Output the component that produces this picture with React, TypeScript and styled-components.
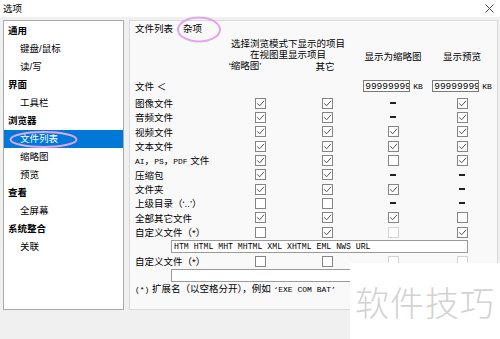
import React from 'react';
import styled, { createGlobalStyle } from 'styled-components';

const GlobalStyle = createGlobalStyle`
  html, body {
    margin: 0;
    padding: 0;
    background: #f0f0f0;
  }
  body {
    font-family: "Liberation Sans", "Noto Sans CJK SC", sans-serif;
    color: #000;
  }
`;

// label | 缩略图 | 其它 | 显示为缩略图 | 显示预览
const COLS = '90px 70px 64px 68px 70px';

type Mark = 'on' | 'off' | 'dash' | 'dis' | 'none';

const Mono = styled.span`
  font-family: "Liberation Mono", monospace;
  font-size: 8px;
`;

const fileRows: { label: React.ReactNode; cells: Mark[] }[] = [
  { label: '图像文件', cells: ['on', 'on', 'dash', 'on'] },
  { label: '音频文件', cells: ['on', 'on', 'dash', 'on'] },
  { label: '视频文件', cells: ['on', 'on', 'on', 'on'] },
  { label: '文本文件', cells: ['on', 'on', 'on', 'on'] },
  {
    label: (
      <>
        <Mono>AI</Mono>，<Mono>PS</Mono>，<Mono>PDF</Mono> 文件
      </>
    ),
    cells: ['on', 'on', 'off', 'on'],
  },
  { label: '压缩包', cells: ['on', 'on', 'dash', 'dash'] },
  { label: '文件夹', cells: ['on', 'on', 'on', 'dash'] },
  { label: '上级目录（‘..’）', cells: ['off', 'off', 'dash', 'dash'] },
  { label: '全部其它文件', cells: ['on', 'on', 'on', 'off'] },
  { label: '自定义文件（*）', cells: ['off', 'on', 'dis', 'on'] },
];

const treeItems: { text: string; group?: boolean; selected?: boolean }[] = [
  { text: '通用', group: true },
  { text: '键盘/鼠标' },
  { text: '读/写' },
  { text: '界面', group: true },
  { text: '工具栏' },
  { text: '浏览器', group: true },
  { text: '文件列表', selected: true },
  { text: '缩略图' },
  { text: '预览' },
  { text: '查看', group: true },
  { text: '全屏幕' },
  { text: '系统整合', group: true },
  { text: '关联' },
];

const Checkbox: React.FC<{ mark: Mark }> = ({ mark }) => {
  if (mark === 'none') return null;
  if (mark === 'dash') return <Dash />;
  return (
    <Box $disabled={mark === 'dis'}>
      {mark === 'on' && (
        <svg width="9" height="9" viewBox="0 0 9 9">
          <polyline points="1.2,4.3 3.6,6.8 8,1.8" fill="none" stroke="#555" strokeWidth="1" />
        </svg>
      )}
    </Box>
  );
};

const App: React.FC = () => {
  return (
    <Window>
      <GlobalStyle />
      <TitleBar>
        <span>选项</span>
        <svg width="9" height="9" viewBox="0 0 9 9">
          <path d="M0.5 0.5 L8.5 8.5 M8.5 0.5 L0.5 8.5" stroke="#444" strokeWidth="1" />
        </svg>
      </TitleBar>

      <Body>
        <Tree>
          {treeItems.map((it) => (
            <TreeItem key={it.text} $group={it.group} $selected={it.selected}>
              {it.text}
            </TreeItem>
          ))}
        </Tree>

        <Panel>
          <Tabs>
            <Tab $active>文件列表</Tab>
            <Tab>杂项</Tab>
          </Tabs>

          <Header>
            <HeadCell $col="2 / 4" $row="1 / 3" $shiftX={8}>
              <div>选择浏览模式下显示的项目</div>
              <div>在视图里显示项目</div>
            </HeadCell>
            <HeadCell $col="2" $row="3" $shiftX={30}>‘缩略图’</HeadCell>
            <HeadCell $col="3" $row="3" $shiftX={4} $shiftY={2}>其它</HeadCell>
            <HeadCell $col="4" $row="1 / 4" $shiftY={3}>显示为缩略图</HeadCell>
            <HeadCell $col="5" $row="1 / 4" $shiftY={3}>显示预览</HeadCell>
          </Header>

          <SizeRow>
            <span>文件 ＜</span>
            <span />
            <span />
            <SizeCell>
              <SizeInput readOnly value="99999999" />
              <Mono>KB</Mono>
            </SizeCell>
            <SizeCell>
              <SizeInput readOnly value="99999999" />
              <Mono>KB</Mono>
            </SizeCell>
          </SizeRow>

          <Rows>
            {fileRows.map((r, i) => (
              <Row key={i}>
                <Label>{r.label}</Label>
                {r.cells.map((c, j) => (
                  <Cell key={j}>
                    <Checkbox mark={c} />
                  </Cell>
                ))}
              </Row>
            ))}
            <ExtLine>
              <ExtInput readOnly value="HTM HTML MHT MHTML XML XHTML EML NWS URL" />
            </ExtLine>
            <Row>
              <Label>自定义文件（*）</Label>
              <Cell><Checkbox mark="off" /></Cell>
              <Cell><Checkbox mark="off" /></Cell>
              <Cell><Checkbox mark="dis" /></Cell>
              <Cell><Checkbox mark="dis" /></Cell>
            </Row>
            <ExtLine $flush>
              <ExtInput readOnly value="" />
            </ExtLine>
            <Footnote>
              <Mono>(*)</Mono> 扩展名（以空格分开），例如 <Mono>‘EXE COM BAT’</Mono>
            </Footnote>
          </Rows>
        </Panel>
      </Body>

      <Marks width="500" height="339" viewBox="0 0 500 339">
        <ellipse cx="43.5" cy="139.5" rx="33" ry="7.5" fill="none" stroke="#e3a4ee" strokeWidth="2" />
        <ellipse cx="199" cy="29.5" rx="21" ry="12" fill="none" stroke="#e3a4ee" strokeWidth="2" />
      </Marks>

      <Watermark>软件技巧</Watermark>
    </Window>
  );
};

export default App;

// Styled Components
const Window = styled.div`
  position: relative;
  width: 500px;
  height: 339px;
  overflow: hidden;
  background: #f0f0f0;
  font-size: 9.5px;
`;

const TitleBar = styled.div`
  height: 17px;
  background: #fff;
  display: flex;
  align-items: center;
  justify-content: space-between;
  padding: 0 6px 0 3px;
  line-height: 17px;

  svg {
    margin-top: -1px;
  }
`;

const Body = styled.div`
  display: flex;
  gap: 5px;
  padding: 3px 0 0 3px;
`;

const Tree = styled.div`
  width: 119px;
  height: 287px;
  padding-top: 1px;
  border: 1px solid #a9a9a9;
  background: #fff;
`;

const TreeItem = styled.div<{ $group?: boolean; $selected?: boolean }>`
  height: 18px;
  line-height: 18px;
  padding-left: ${(p) => (p.$group ? 4 : 16)}px;
  font-weight: ${(p) => (p.$group ? 700 : 400)};
  background: ${(p) => (p.$selected ? '#0078d7' : 'transparent')};
  color: ${(p) => (p.$selected ? '#fff' : '#000')};
`;

const Panel = styled.div`
  width: 362px;
  height: 288px;
  padding-left: 5px;
  border: 1px solid #d9d9d9;
  background: #f9f9f9;
  display: flex;
  flex-direction: column;
`;

const Tabs = styled.div`
  display: flex;
  height: 15px;
  margin-left: -4px;
`;

const Tab = styled.div<{ $active?: boolean }>`
  padding: 0 4px;
  line-height: 15px;
  margin-right: ${(p) => (p.$active ? 2 : 0)}px;
`;

const Header = styled.div`
  display: grid;
  grid-template-columns: ${COLS};
  grid-template-rows: repeat(3, 11px);
  line-height: 11px;
  margin-top: 2px;
  text-align: center;
`;

const HeadCell = styled.div<{ $col: string; $row: string; $shiftX?: number; $shiftY?: number }>`
  grid-column: ${(p) => p.$col};
  grid-row: ${(p) => p.$row};
  padding-right: ${(p) => p.$shiftX ?? 0}px;
  padding-top: ${(p) => p.$shiftY ?? 0}px;
  align-self: center;
  white-space: nowrap;
`;

const SizeRow = styled.div`
  display: grid;
  grid-template-columns: ${COLS};
  height: 14px;
  align-items: center;
  margin-top: 8px;
`;

const SizeCell = styled.div`
  display: flex;
  align-items: center;
  justify-content: center;
  gap: 3px;
`;

const SizeInput = styled.input`
  width: 47px;
  height: 12px;
  box-sizing: border-box;
  padding: 0 0 0 1px;
  margin: 0;
  border: 1px solid #7a7a7a;
  background: #fff;
  font-family: "Liberation Mono", monospace;
  font-size: 9.5px;
  color: #000;
  outline: none;
`;

const Rows = styled.div`
  display: flex;
  flex-direction: column;
  margin-top: 3px;
`;

const Row = styled.div`
  display: grid;
  grid-template-columns: ${COLS};
  height: 14.33px;
  align-items: center;
`;

const Label = styled.span`
  white-space: nowrap;
`;

const Cell = styled.div`
  display: flex;
  justify-content: center;
  align-items: center;
`;

const Box = styled.span<{ $disabled?: boolean }>`
  width: 11px;
  height: 11px;
  box-sizing: border-box;
  border: 1px solid ${(p) => (p.$disabled ? '#d4d4d4' : '#858585')};
  background: #fff;
  display: flex;
  align-items: center;
  justify-content: center;
`;

const Dash = styled.span`
  width: 6px;
  height: 2px;
  background: #222;
`;

const ExtLine = styled.div<{ $flush?: boolean }>`
  padding-left: 36px;
  margin: ${(p) => (p.$flush ? '0' : '1px 0 1px')};
`;

const ExtInput = styled.input`
  display: block;
  width: 297px;
  height: 13px;
  box-sizing: border-box;
  padding: 0 0 0 2px;
  margin: 0;
  border: 1px solid #9a9a9a;
  background: #fff;
  font-family: "Liberation Mono", monospace;
  font-size: 8.2px;
  color: #000;
  outline: none;
`;

const Footnote = styled.div`
  height: 14px;
  line-height: 14px;
  white-space: nowrap;
`;

const Marks = styled.svg`
  position: absolute;
  left: 0;
  top: 0;
  pointer-events: none;
`;

const Watermark = styled.div`
  position: absolute;
  right: 0;
  bottom: 0;
  width: 150px;
  height: 76px;
  background: #fff;
  display: flex;
  align-items: center;
  justify-content: center;
  font-family: "Noto Sans CJK SC", sans-serif;
  font-size: 34px;
  font-weight: 300;
  color: #d2d2d2;
  letter-spacing: 1px;
`;
